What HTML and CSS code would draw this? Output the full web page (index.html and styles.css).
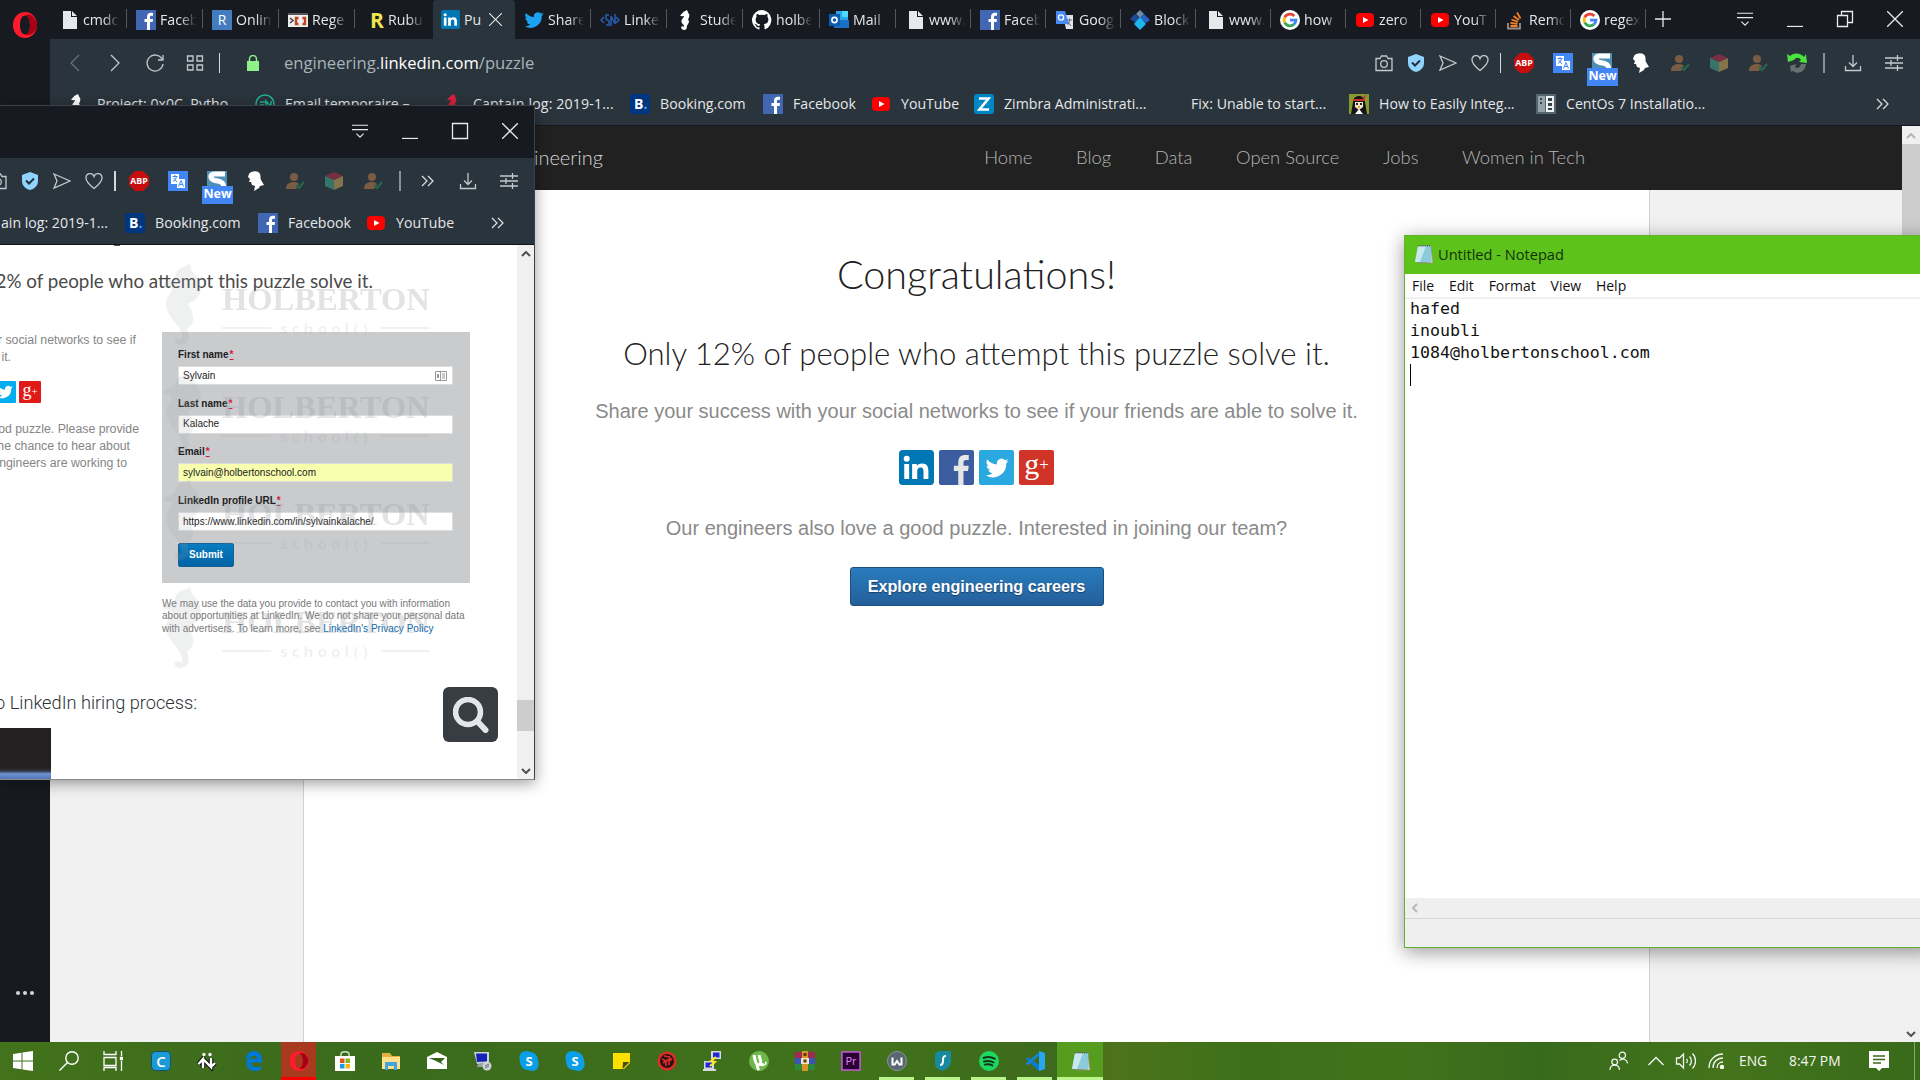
FILE: index.html
```
<!DOCTYPE html>
<html lang="en">
<head>
<meta charset="utf-8">
<title>Puzzle | LinkedIn Engineering</title>
<link rel="stylesheet" href="styles.css">
</head>
<body>
<svg class="defs" aria-hidden="true">
  <symbol id="page" viewBox="0 0 20 20"><path fill="#e6e9eb" d="M4 1h8v6h6v12H4zM13 1l5 5h-5z"/></symbol>
  <symbol id="fb" viewBox="0 0 20 20"><path fill="#4267b2" d="M0 0h20v20H0z"/><path fill="#fff" d="M11 20v-8H8.500V9H11V7c0-2.800 1.600-4.200 4-4.200.9 0 1.700.1 2 .1v2.800h-1.500c-1.200 0-1.500.6-1.500 1.500V9h3l-.4 3H14v8z"/></symbol>
  <symbol id="in" viewBox="0 0 20 20"><rect width="20" height="20" rx="2" fill="#0077b5"/><path fill="#fff" d="M3 8h2.800v8.500H3zM7.500 8h2.700v1.200c.5-.8 1.400-1.500 3-1.500 2.800 0 3.600 1.800 3.600 4.300v4.500H14v-4c0-1.300-.2-2.500-1.700-2.500s-1.900 1.200-1.900 2.400v4.100H7.500z"/><circle cx="4.400" cy="5" r="1.700" fill="#fff"/></symbol>
  <symbol id="bird" viewBox="0 0 24 24"><path d="M23.600 4.900c-.8.400-1.700.6-2.700.8 1-.6 1.700-1.500 2.100-2.600-.9.500-1.900.9-3 1.100A4.700 4.700 0 0 0 12 8.500C8.100 8.300 4.600 6.400 2.300 3.600a4.700 4.700 0 0 0 1.400 6.300c-.8 0-1.500-.2-2.100-.6 0 2.300 1.600 4.200 3.800 4.700-.7.200-1.400.2-2.100.1.600 1.900 2.300 3.200 4.400 3.200A9.500 9.500 0 0 1 .7 19.300 13.400 13.400 0 0 0 21.300 7.300c.9-.7 1.700-1.500 2.300-2.400z"/></symbol>
  <symbol id="yt" viewBox="0 0 20 20"><rect x="1" y="3" width="18" height="14" rx="4" fill="#f00"/><path fill="#fff" d="M8 7l5.500 3L8 13z"/></symbol>
  <symbol id="google" viewBox="0 0 20 20"><circle cx="10" cy="10" r="10" fill="#fff"/><g fill="none" stroke-width="2.800"><path stroke="#ea4335" d="M14.300 6A6 6 0 0 0 4.700 7.300"/><path stroke="#fbbc05" d="M4.700 7.300a6 6 0 0 0 0 5.400"/><path stroke="#34a853" d="M4.700 12.700a6 6 0 0 0 9.200 1.700"/><path stroke="#4285f4" d="M13.900 14.400A6 6 0 0 0 16 10.200h-6"/></g></symbol>
  <symbol id="horse" viewBox="0 0 20 20"><path d="M11 0c-1 1-3.500 1-4.500 3L4 5.500l2 .8 2-.3c0 2-3 3-2.500 6 .4 2 2.500 2.500 2.500 4 0 1-1.500 1-1.500 0L5 17c.3 2 1.600 3 3 3 2 0 3.300-1.700 2.800-3.800L12 14c1.600-1.500 1-3.400 0-4.500 1.500-2 2-5 .3-6.500z"/></symbol>
  <symbol id="opera" viewBox="0 0 26 26"><path fill="#ff1b2d" fill-rule="evenodd" d="M13 0C6 0 1 5.700 1 13s5 13 12 13 12-5.700 12-13S20 0 13 0zm0 3.500c3 0 5 4 5 9.500s-2 9.500-5 9.500S8 18.500 8 13s2-9.500 5-9.500z"/><path fill="#a70014" d="M13 3.500c4-2.500 8 .2 9 2.500 4 5 4 9 0 14-2 2.500-6 4.500-9 2.500 3 0 5-4 5-9.500s-2-9.500-5-9.500z"/></symbol>
  <symbol id="menu" viewBox="0 0 18 18"><path d="M0 2.500h18M0 7.500h18M5 12l4 4 4-4"/></symbol>
  <symbol id="min" viewBox="0 0 16 16"><path d="M0 15.500h16"/></symbol>
  <symbol id="x" viewBox="0 0 16 16"><path d="M0 0l16 16M16 0L0 16"/></symbol>
  <symbol id="more" viewBox="0 0 14 12"><path d="M1 1l5 5-5 5M7 1l5 5-5 5"/></symbol>
  <symbol id="camera" viewBox="0 0 18 18"><path d="M1 4.500h4L6.500 2h5L13 4.500h4v12H1z"/><circle cx="9" cy="10" r="3.300"/></symbol>
  <symbol id="shield" viewBox="0 0 18 18"><path fill="#8fd3fe" stroke="none" d="M9 0l8 3v6c0 5-4 8-8 9-4-1-8-4-8-9V3z"/><path stroke="#20303b" stroke-width="2" d="M5 8.500l3 3 5-5"/></symbol>
  <symbol id="send" viewBox="0 0 18 18"><path d="M1 2l16 7-16 7 3-7z"/></symbol>
  <symbol id="heart" viewBox="0 0 18 18"><path d="M9 16.500C4 12.500 1 9.500 1 6c0-5 6.500-6 8-1.500C10.500 0 17 1 17 6c0 3.500-3 6.500-8 10.500z"/></symbol>
  <symbol id="abp" viewBox="0 0 20 20"><path fill="#c70d0e" stroke="none" d="M6 0h8l6 6v8l-6 6H6l-6-6V6z"/><text x="10" y="13.300" text-anchor="middle" class="abp-t">ABP</text></symbol>
  <symbol id="translate" viewBox="0 0 20 20"><path fill="#4285f4" stroke="none" d="M0 0h20v20H0z"/><path fill="#fff" stroke="none" d="M3 3h8v5h6v9H9v-4H3z"/><path stroke="#4285f4" d="M4.500 5.500h5M7 4v1.500M5 10.500c2-1 3-3 3.500-5M5.500 7l3.500 4M10.500 15.500L13 9.500l2.500 6M11.500 13.500h3"/></symbol>
  <symbol id="sx" viewBox="0 0 20 20"><path fill="#4d8fb5" stroke="none" d="M0 0h20v20H0z"/><path stroke="#fff" stroke-width="5" d="M18 3H8C2 3 3 8 8 9.500c7 1 10 3 8 8.500"/></symbol>
  <symbol id="head" viewBox="0 0 20 20"><path fill="#fff" stroke="none" d="M3 3c2-3 9-4 11 0 1 2 0 4 1 6l3 5-4 1-1 2-5 3 1-5-3-1-1-3H3l1-3-2-2z"/></symbol>
  <symbol id="person" viewBox="0 0 20 20"><g fill="#7b5c43" stroke="none"><circle cx="9" cy="6" r="4"/><path d="M1 18c0-5 3-7 8-7 3 0 4 1 5 2l-3 5z"/></g><path stroke="#23694f" stroke-width="2" d="M11 14l3 3 5-6"/></symbol>
  <symbol id="cube" viewBox="0 0 20 20"><g stroke="none"><path fill="#792f43" d="M10 1l9 4-9 4-9-4z"/><path fill="#377568" d="M1 5l9 4v10l-9-4z"/><path fill="#85744b" d="M19 5l-9 4v10l9-4z"/></g></symbol>
  <symbol id="refresh" viewBox="0 0 20 20"><path fill="#4be33e" stroke="none" d="M0 1l3 2c4-4 11-3 14 1l2-3 1 9-8-1 2-2c-2-3-5-3-7 0L1 9z"/><path fill="#68706f" stroke="none" d="M3 13l6-2-1 3c2 2 5 1 6-3h5c-1 8-8 11-13 7l-2 1z"/></symbol>
  <symbol id="down" viewBox="0 0 18 18"><path d="M9 1v11M5 8.500l4 4 4-4M1.500 12v4.500h15V12"/></symbol>
  <symbol id="tune" viewBox="0 0 18 18"><path d="M0 4h18M0 9h18M0 14h18M12.500 1v6M6 6v6M12.500 11v6"/></symbol>
  <symbol id="skype" viewBox="0 0 20 20"><path fill="#0a9fe8" d="M7 0c3 0 4 1 5 1 5 1 7 5 7 9 2 5-1 10-6 10-2 0-3-1-4-1-5 0-8-4-8-9C-1 5 2 0 7 0z"/><text x="10" y="14.500" text-anchor="middle" class="skype-t">S</text></symbol>
  <symbol id="notepad" viewBox="0 0 20 20"><path fill="#e9eef0" stroke="#8a8a80" stroke-width=".7" d="M17 2l2 17H4l13-1z"/><path fill="#8ccbdb" d="M4 2h13v16H1z"/><path fill="#c6e8ef" d="M4 2h8L6 18H1z"/><path stroke="#566" stroke-width="1.400" stroke-dasharray="1.200 1" d="M4 1.800h13"/></symbol>
  <symbol id="seahorse" viewBox="0 0 44 82"><path d="M28 0c1 4 0 7 4 10 6 6 8 14 6 20-2 5-8 7-12 9 0 4 5 8 5 15 1 6-3 9-6 12 2 5 3 12-3 15-5 3-11-1-9-5 2-2 3 1 6 0 3-3 0-8-4-14C8 53 2 46 5 36c1-4 5-7 5-11-3-2-7-1-9-3 2-4 7-4 11-7 2-3 1-5 4-8 4-4 10-3 12-7z"/><path class="sh" d="M16 36c5-6 17-5 21-12 2 8-2 13-8 15-5 2-6 6-3 13-7-4-12-10-10-16z"/></symbol>
</svg>

<div class="desktop">

<section class="browser">
  <aside class="rail"><svg class="rail-logo"><use href="#opera"/></svg><span class="dots"><i></i><i></i><i></i></span></aside>
  <div class="main">
    <div class="tabs">
      <div class="tab w77"><svg><use href="#page"/></svg><span>cmdc</span></div>
      <div class="tab"><svg><use href="#fb"/></svg><span>Faceb</span></div>
      <div class="tab"><svg viewBox="0 0 20 20"><path fill="#437dbf" d="M0 0h20v20H0z"/><text x="10" y="15" text-anchor="middle" class="g-r">R</text></svg><span>Onlin</span></div>
      <div class="tab"><svg viewBox="0 0 20 20"><path fill="#eee" d="M0 3h20v14H0z"/><path fill="#555" d="M0 3h20v2H0z"/><path d="M2 8l3 2.500L2 13" fill="none" stroke="#444" stroke-width="1.500"/><path d="M10.500 8H8v6h2.500M14.500 8H17v6h-2.500" fill="none" stroke="#c0431d" stroke-width="2.400"/></svg><span>Rege</span></div>
      <div class="tab w78 last"><svg viewBox="0 0 20 20"><text x="13" y="18" text-anchor="middle" class="g-rub">R</text></svg><span>Rubu</span></div>
      <div class="tab active"><svg><use href="#in"/></svg><span>Pu</span><svg class="ctl close-s"><use href="#x"/></svg></div>
      <div class="tab"><svg fill="#1da1f2"><use href="#bird"/></svg><span>Share</span></div>
      <div class="tab"><svg viewBox="0 0 20 20" fill="none" stroke="#2a5db0" stroke-width="1.500"><path d="M4 7l-3 3 3 3M16 7l3 3-3 3M9 5H6v4l3 2v4H6M11 16V6l4 8V4"/></svg><span>Linke</span></div>
      <div class="tab"><svg fill="#fff"><use href="#horse"/></svg><span>Stude</span></div>
      <div class="tab w77"><svg viewBox="0 0 16 16"><path fill="#fff" d="M8 0a8 8 0 0 0-2.500 15.600c.4.100.5-.2.500-.4v-1.500c-2.200.5-2.700-1-2.700-1-.4-.9-.9-1.200-.9-1.200-.7-.5.100-.5.100-.5.800.1 1.200.8 1.200.8.7 1.300 1.900.9 2.300.7.100-.5.300-.9.500-1.100-1.800-.2-3.600-.9-3.600-4 0-.9.300-1.600.8-2.100-.1-.2-.4-1 .1-2.100 0 0 .7-.2 2.200.8a7.700 7.700 0 0 1 4 0c1.500-1 2.200-.8 2.200-.8.400 1.100.1 1.900.1 2.100.5.500.8 1.200.8 2.100 0 3.100-1.900 3.700-3.700 3.900.3.300.6.800.6 1.500v2.200c0 .2.100.5.500.4A8 8 0 0 0 8 0z"/></svg><span>holbe</span></div>
      <div class="tab"><svg viewBox="0 0 20 20"><path fill="#28a8ea" d="M7 1h12v11H7z"/><path fill="#50d9ff" d="M13 1h6v6h-6z"/><path fill="#1b6fc5" d="M5 10l15 0v8H5z"/><path fill="#0a5cb0" d="M0 4h11v12H0z"/><circle cx="5.500" cy="10" r="2.600" fill="none" stroke="#fff" stroke-width="1.600"/></svg><span>Mail</span></div>
      <div class="tab w75"><svg><use href="#page"/></svg><span>www.</span></div>
      <div class="tab w75"><svg><use href="#fb"/></svg><span>Faceb</span></div>
      <div class="tab w75"><svg viewBox="0 0 20 20"><path fill="#dfe3ea" d="M8 5h10v14h-7z"/><path fill="#4a8af4" d="M1 1h9l4 13H1z"/><circle cx="6" cy="7.500" r="2.600" fill="none" stroke="#fff" stroke-width="1.300"/><path d="M12 10h5M14.500 8.500V10c0 2-1 4-2 5M13 12l3 4" stroke="#6a7480" fill="none"/></svg><span>Goog</span></div>
      <div class="tab w75"><svg viewBox="0 0 20 20"><path fill="#6f8fae" d="M10 0l4 4-4 4-4-4z"/><path fill="#1e4c94" d="M5 4l5 5-4 4-6-4z"/><path fill="#2a63c8" d="M14 4l6 6-4 3-6-5z"/><path fill="#1fb4ee" d="M10 7l6 7-6 6-6-6z"/></svg><span>Block</span></div>
      <div class="tab w75"><svg><use href="#page"/></svg><span>www.</span></div>
      <div class="tab w75"><svg><use href="#google"/></svg><span>how</span></div>
      <div class="tab w75"><svg><use href="#yt"/></svg><span>zero</span></div>
      <div class="tab w75"><svg><use href="#yt"/></svg><span>YouT</span></div>
      <div class="tab w75"><svg viewBox="0 0 20 20" fill="none"><path stroke="#9a8f86" stroke-width="1.800" d="M3 13v5.500h12V13"/><path stroke="#f48024" stroke-width="1.800" d="M5.500 16h7M5.500 13l7 .8M6.500 9.500l6.500 2.300M8.500 6l5.500 4M12 2.500l3.500 6"/></svg><span>Remo</span></div>
      <div class="tab w75"><svg><use href="#google"/></svg><span>regex</span></div>
      <svg class="ctl plus" viewBox="0 0 16 16"><path d="M8 0v16M0 8h16"/></svg>
      <div class="controls"><svg class="ctl"><use href="#menu"/></svg><svg class="ctl"><use href="#min"/></svg><svg class="ctl" viewBox="0 0 16 16"><path d="M.5 4.500h10v11H.5zM4.500 4.500v-4h11v11h-5"/></svg><svg class="ctl"><use href="#x"/></svg></div>
    </div>
    <div class="toolbar">
      <svg class="ln dim" viewBox="0 0 18 18"><path d="M13 1L5 9l8 8"/></svg>
      <svg class="ln" viewBox="0 0 18 18"><path d="M5 1l8 8-8 8"/></svg>
      <svg class="ln" viewBox="0 0 18 18"><path d="M16 5a8 8 0 1 0 1 5M17 1v5h-5"/></svg>
      <svg class="ln" viewBox="0 0 18 18"><path d="M1.500 2h5.500v5H1.500zM11 2h5.500v5H11zM1.500 11h5.500v5H1.500zM11 11h5.500v5H11z"/></svg>
      <i class="bar thin"></i>
      <svg class="lock" viewBox="0 0 12 16"><path fill="#8ff08a" d="M0 6h12v10H0z"/><path fill="none" stroke="#8ff08a" stroke-width="1.500" d="M2.500 6V4a3.500 3.500 0 0 1 7 0v2"/></svg>
      <span class="url">engineering.<b>linkedin.com</b>/puzzle</span>
      <div class="ext">
        <svg class="ln"><use href="#camera"/></svg><svg class="ln"><use href="#shield"/></svg><svg class="ln"><use href="#send"/></svg><svg class="ln"><use href="#heart"/></svg><i class="bar thin"></i>
        <svg class="ex"><use href="#abp"/></svg><svg class="ex"><use href="#translate"/></svg><span class="ex sbox"><svg class="ex"><use href="#sx"/></svg><em>New</em></span><svg class="ex"><use href="#head"/></svg><svg class="ex"><use href="#person"/></svg><svg class="ex"><use href="#cube"/></svg><svg class="ex"><use href="#person"/></svg><svg class="ex"><use href="#refresh"/></svg><i class="bar grey"></i>
        <svg class="ln"><use href="#down"/></svg><svg class="ln tune"><use href="#tune"/></svg>
      </div>
    </div>
    <div class="marks">
      <div class="mk m188"><svg fill="#fff"><use href="#horse"/></svg><span>Project: 0x0C. Pytho...</span></div>
      <div class="mk m188"><svg viewBox="0 0 20 20" fill="none" stroke="#1fb58f" stroke-width="1.600"><circle cx="10" cy="10" r="9"/><path d="M5 8h5M5 11h4M11 13V7l5 6V7"/></svg><span>Email temporaire –...</span></div>
      <div class="mk m187"><svg fill="#d8213f"><use href="#horse"/></svg><span class="wide">Captain log: 2019-1...</span></div>
      <div class="mk m133"><svg viewBox="0 0 20 20"><rect width="20" height="20" rx="2" fill="#003580"/><text x="4" y="15" class="g-b">B<tspan fill="#3ba7ee">.</tspan></text></svg><span>Booking.com</span></div>
      <div class="mk m108"><svg><use href="#fb"/></svg><span>Facebook</span></div>
      <div class="mk m103"><svg><use href="#yt"/></svg><span>YouTube</span></div>
      <div class="mk m187"><svg viewBox="0 0 20 20"><rect width="20" height="20" rx="3" fill="#0087c3"/><path fill="none" stroke="#fff" stroke-width="2.600" d="M5 4.500h9.500L5.500 15.500H15"/></svg><span>Zimbra Administrati...</span></div>
      <div class="mk m188"><svg></svg><span>Fix: Unable to start...</span></div>
      <div class="mk m187"><svg viewBox="0 0 20 20"><path fill="#879a2d" d="M0 0h20v20H0z"/><path fill="#151515" d="M4 8c0-8 12-8 12 0l2 12H2z"/><path fill="#f0e4cf" d="M6 8h8v5l-4 3-4-3z"/><path fill="#fff" d="M6 20l4-5 4 5z"/><path fill="#c9302c" d="M4 5h12v2H4zM13 4l5-4-3 5z"/><path fill="#222" d="M7 9h2v2H7zM11 9h2v2h-2z"/><path fill="#f0a020" d="M9 12h2v2H9z"/></svg><span>How to Easily Integ...</span></div>
      <div class="mk"><svg viewBox="0 0 20 20"><path fill="#56666f" d="M0 0h20v20H0z"/><path fill="#93a3ac" d="M2 2h7v16H2z"/><path fill="#edf1f3" d="M10 2h8v16h-8z"/><path fill="#35434b" d="M4 4h2v2H4zM4 8h2v2H4zM12 4h4v3h-4zM12 9h4v3h-4zM12 14h4v2h-4z"/></svg><span>CentOs 7 Installatio...</span></div>
      <svg class="ln more"><use href="#more"/></svg>
    </div>
    <div class="view">
      <div class="site">
        <header class="nav"><span class="brand">Engineering</span><nav><a>Home</a><a>Blog</a><a>Data</a><a>Open Source</a><a>Jobs</a><a>Women in Tech</a></nav></header>
        <main class="sheet">
          <h1>Congratulations!</h1>
          <h2>Only 12% of people who attempt this puzzle solve it.</h2>
          <p>Share your success with your social networks to see if your friends are able to solve it.</p>
          <div class="social">
            <svg><use href="#in"/></svg>
            <svg class="s-fb"><use href="#fb"/></svg>
            <span class="s-tw"><svg fill="#fff"><use href="#bird"/></svg></span>
            <span class="s-gp">g<small>+</small></span>
          </div>
          <p class="p2">Our engineers also love a good puzzle. Interested in joining our team?</p>
          <a class="cta">Explore engineering careers</a>
        </main>
      </div>
      <div class="scroll"><svg viewBox="0 0 10 6"><path d="M1 5l4-4 4 4" stroke="#b5b5b5"/></svg><i></i><svg viewBox="0 0 10 6"><path d="M1 1l4 4 4-4" stroke="#505050"/></svg></div>
    </div>
  </div>
</section>

<section class="popup">
  <div class="p-title"><svg class="ctl"><use href="#menu"/></svg><svg class="ctl"><use href="#min"/></svg><svg class="ctl" viewBox="0 0 16 16"><path d="M.5.500h15v15H.5z"/></svg><svg class="ctl"><use href="#x"/></svg></div>
  <div class="p-tools ext">
    <svg class="ln"><use href="#camera"/></svg><svg class="ln"><use href="#shield"/></svg><svg class="ln"><use href="#send"/></svg><svg class="ln"><use href="#heart"/></svg><i class="bar"></i>
    <svg class="ex"><use href="#abp"/></svg><svg class="ex"><use href="#translate"/></svg><span class="ex sbox"><svg class="ex"><use href="#sx"/></svg><em>New</em></span><svg class="ex"><use href="#head"/></svg><svg class="ex"><use href="#person"/></svg><svg class="ex"><use href="#cube"/></svg><svg class="ex"><use href="#person"/></svg><i class="bar grey p-bar"></i>
    <svg class="more"><use href="#more"/></svg><svg class="ln p-down"><use href="#down"/></svg><svg class="ln tune"><use href="#tune"/></svg>
  </div>
  <div class="p-marks">
    <div class="mk cut"><span>ain log: 2019-1...</span></div>
    <div class="mk m133"><svg viewBox="0 0 20 20"><rect width="20" height="20" rx="2" fill="#003580"/><text x="4" y="15" class="g-b">B<tspan fill="#3ba7ee">.</tspan></text></svg><span>Booking.com</span></div>
    <div class="mk m108"><svg><use href="#fb"/></svg><span>Facebook</span></div>
    <div class="mk"><svg><use href="#yt"/></svg><span>YouTube</span></div>
    <svg class="more"><use href="#more"/></svg>
  </div>
  <div class="p-body">
    <div class="doc">
      <i class="tail"></i>
      <div class="marksheet">
        <div class="wm"><svg><use href="#seahorse"/></svg><div><b>HOLBERTON</b><span>school()</span></div></div>
        <div class="wm"><svg><use href="#seahorse"/></svg><div><b>HOLBERTON</b><span>school()</span></div></div>
        <div class="wm"><svg><use href="#seahorse"/></svg><div><b>HOLBERTON</b><span>school()</span></div></div>
        <div class="wm"><svg><use href="#seahorse"/></svg><div><b>HOLBERTON</b><span>school()</span></div></div>
      </div>
      <h3>2% of people who attempt this puzzle solve it.</h3>
      <div class="cols">
        <div class="left">
          <p>r social networks to see if</p><p class="l2">it.</p>
          <div class="mini"><span class="s-tw"><svg fill="#fff"><use href="#bird"/></svg></span><span class="s-gp">g<small>+</small></span></div>
          <p class="l3">od puzzle. Please provide</p><p class="l4">he chance to hear about</p><p class="l5">ngineers are working to</p>
        </div>
        <div class="right">
          <form class="form">
            <label>First name<u>*</u></label><div class="field">Sylvain<svg viewBox="0 0 12 10"><path fill="none" stroke="#999" d="M.5.500h11v9H.5zM5.500 1v8M7 3h3M7 5h3M7 7h3"/><path fill="#999" d="M2 3h2v4H2z"/></svg></div>
            <label>Last name<u>*</u></label><div class="field">Kalache</div>
            <label>Email<u>*</u></label><div class="field yellow">sylvain@holbertonschool.com</div>
            <label>LinkedIn profile URL<u>*</u></label><div class="field">https://www.linkedin.com/in/sylvainkalache/</div>
            <div class="submit">Submit</div>
          </form>
          <p class="legal">We may use the data you provide to contact you with information<br>about opportunities at LinkedIn. We do not share your personal data<br>with advertisers. To learn more, see <a>LinkedIn's Privacy Policy</a></p>
        </div>
      </div>
      <div class="foot"><span>o LinkedIn hiring process:</span><div class="find"><svg viewBox="0 0 36 36"><circle cx="15" cy="15" r="12.500" fill="none" stroke="#e3e5ec" stroke-width="5.500"/><path stroke="#e3e5ec" stroke-width="6" stroke-linecap="round" d="M25 25l7.500 8"/></svg></div></div>
      <div class="photo"></div>
    </div>
    <div class="scroll p-scroll"><svg viewBox="0 0 10 6"><path d="M1 5l4-4 4 4" stroke="#505050"/></svg><i></i><svg viewBox="0 0 10 6"><path d="M1 1l4 4 4-4" stroke="#505050"/></svg></div>
  </div>
</section>

<section class="notepad">
  <div class="n-title"><svg><use href="#notepad"/></svg><span>Untitled - Notepad</span></div>
  <div class="n-menu"><span>File</span><span>Edit</span><span>Format</span><span>View</span><span>Help</span></div>
  <div class="n-text">hafed<br>inoubli<br>1084@holbertonschool.com<br><i class="caret"></i></div>
  <div class="n-scroll"><svg viewBox="0 0 7 10"><path d="M6 1L2 5l4 4" fill="none" stroke="#b8b8b8" stroke-width="2"/></svg></div>
  <div class="n-status"></div>
</section>

<footer class="taskbar">
  <div class="apps">
    <div class="app"><svg viewBox="0 0 20 20"><path fill="#fff" d="M0 3l8.500-1.200v7.700H0zM9.500 1.600L20 0v9.500H9.500zM0 10.500h8.500v7.700L0 17zM9.500 10.500H20V20L9.500 18.400z"/></svg></div>
    <div class="app"><svg viewBox="0 0 20 20" fill="none" stroke="#fff" stroke-width="1.400"><circle cx="13" cy="7" r="6.200"/><path d="M8.500 11.500L.5 19.500"/></svg></div>
    <div class="app"><svg viewBox="0 0 20 20" fill="none" stroke="#fff" stroke-width="1.300"><path d="M1 0v3.500h12V0M1 6.500h12v8H1zM1 20v-3.500h12V20M18.500 0v5M18.500 10v10"/><path fill="#fff" d="M17.500 6.500h2v2h-2z"/></svg></div>
    <div class="app"><svg viewBox="0 0 20 20"><rect x=".5" y=".5" width="19" height="19" rx="4" fill="#1b9ad6" stroke="#17506f"/><text x="10" y="15.500" text-anchor="middle" class="g-c">C</text></svg></div>
    <div class="app"><svg viewBox="0 0 20 20"><path fill="none" stroke="#111" stroke-width="4.500" d="M1.500 13L6 8v9M6 8l8 8V7M14 16l4-4"/><path fill="none" stroke="#fff" stroke-width="2.400" d="M1.500 13L6 8v9M6 8l8 8V7M14 16l4-4"/><circle cx="7" cy="3.500" r="1.700" fill="#fff"/><circle cx="13" cy="3.500" r="1.700" fill="#fff"/></svg></div>
    <div class="app"><svg viewBox="0 0 20 20"><path fill="#0078d7" d="M2 9C3 3 7 0 11 0c5 0 8 4 8 8v3.500H8c0 5 6 5.500 10 3.200v3.800C11 22 3.500 19 3.500 12c0-3 1.500-5 4-6.500C5 6 3 7.500 2 9zm6-1h6c0-4.500-5.500-4.500-6 0z"/></svg></div>
    <div class="app opera-app"><svg><use href="#opera"/></svg></div>
    <div class="app"><svg viewBox="0 0 20 20"><path fill="none" stroke="#cfe0c6" stroke-width="1.500" d="M6 6V3c0-3 8-3 8 0v3"/><path fill="#fff" d="M0 5h20v15H0z"/><path fill="#e8501e" d="M5 7.500h4.500V12H5z"/><path fill="#7cb816" d="M10.500 7.500H15V12h-4.500z"/><path fill="#139ee8" d="M5 13h4.500v4.500H5z"/><path fill="#f9b50a" d="M10.500 13H15v4.500h-4.500z"/></svg></div>
    <div class="app"><svg viewBox="0 0 20 20"><path fill="#e2b23c" d="M1 2h8l2 3h8v4H1z"/><path fill="#ffe08c" d="M1 6h18v12H1z"/><path fill="#3fa5dc" d="M4 19v-8h12v8h-3v-4H7v4z"/></svg></div>
    <div class="app"><svg viewBox="0 0 20 20"><path fill="#fff" d="M0 6l10-5 10 5v12H0z"/><path fill="#35611a" d="M2 7h16l-4 4 3 3-8-4z"/></svg></div>
    <div class="app"><svg viewBox="0 0 20 20"><path fill="#ccd1dc" d="M1 1h15v11l-12 1z"/><path fill="#1522b8" d="M3 2.500h11v8L4 11z"/><path fill="#9aa0a8" d="M5 13h8l3 3H4z"/><circle cx="14" cy="15" r="4.500" fill="#cdd3d2"/><path stroke="#667" fill="none" d="M12 15l4-2M12 17l4-2"/></svg></div>
    <div class="app"><svg><use href="#skype"/></svg></div>
    <div class="app"><svg><use href="#skype"/></svg></div>
    <div class="app"><svg viewBox="0 0 20 20"><path fill="#ffe100" d="M2 2h17v10l-6 6H2z"/><path fill="#4b4a12" d="M12 11h6.500l-7 7z"/></svg></div>
    <div class="app"><svg viewBox="0 0 20 20"><circle cx="10" cy="10" r="9.500" fill="#e02b2b"/><circle cx="10" cy="10" r="7" fill="#2d1010"/><path fill="none" stroke="#e02b2b" stroke-width="1.600" d="M5 8l4 2v5M15 8l-3 2v4M6 12l8-5M7 5l6 1"/></svg></div>
    <div class="app"><svg viewBox="0 0 20 20"><path fill="#d8d8d8" d="M8 0h10v8H8zM1 10h10v8H1zM0 18h13v2H0z"/><path fill="#1d2ad8" d="M10 1.500h6.500v5H10zM2.500 11.500H9v5H2.500z"/><path stroke="#ffe62b" stroke-width="2" fill="none" d="M13 6L8 10l4 1-5 4"/></svg></div>
    <div class="app"><svg viewBox="0 0 20 20"><circle cx="10" cy="10" r="10" fill="#6eb74a"/><path fill="none" stroke="#fff" stroke-width="3" d="M5 4c1 5 2 12 6 9 2-2-.5-6-1-9M11 13c3 2 6-1 5-1M8 13c0 3 1 5 2 6"/></svg></div>
    <div class="app"><svg viewBox="0 0 20 20"><path fill="#a22a52" d="M0 1h20v6H0z"/><path fill="#3a53b8" d="M0 7h20v6H0z"/><path fill="#2e8a3a" d="M0 13h20v6H0z"/><path fill="#d99628" d="M7 0h6v20H7z"/><path fill="#f2e3c0" d="M6 7h8v6H6z"/><path fill="#5a3a10" d="M8.500 2h3v3h-3zM8.500 8.500h3v3h-3z"/></svg></div>
    <div class="app"><svg viewBox="0 0 20 20"><path fill="#2a0034" stroke="#c35ad8" stroke-width="1.500" d="M1 1h18v18H1z"/><text x="10" y="13.500" text-anchor="middle" class="g-pr">Pr</text></svg></div>
    <div class="app run"><svg viewBox="0 0 20 20"><circle cx="10" cy="10" r="9.500" fill="#5a6672" stroke="#8a949c"/><path fill="none" stroke="#fff" stroke-width="2" d="M5.500 6.500v7h2.200L10 10l2.300 3.500h2.200v-7"/></svg></div>
    <div class="app run"><svg viewBox="0 0 20 20"><path fill="#178a9e" d="M7 0h11v10c0 6-5 8-8 10-4-1-8-3-8-7V5c0-3 2-5 5-5z"/><path fill="none" stroke="#fff" stroke-width="2" d="M13 5c-3 0-3 2-3 5s-1 4-3 4"/></svg></div>
    <div class="app run"><svg viewBox="0 0 20 20"><circle cx="10" cy="10" r="10" fill="#1ed760"/><path fill="none" stroke="#12351c" stroke-width="2" stroke-linecap="round" d="M4.500 7c4-1.500 8-1 11.500.8M5 10.500c3.500-1 7-.6 9.500.8M5.800 13.600c3-.8 5.500-.4 7.500.8"/></svg></div>
    <div class="app run"><svg viewBox="0 0 20 20"><path fill="#0a7bd0" d="M14 0l6 2v16l-6 2L1 8l2-2 11 8z"/><path fill="#2aa5f0" d="M14 0l6 2v16l-6 2z"/><path fill="none" stroke="#1484d8" stroke-width="2.600" d="M1.500 13.500L14 3"/></svg></div>
    <div class="app np"><svg><use href="#notepad"/></svg></div>
  </div>
  <div class="tray">
    <svg class="t-people" viewBox="0 0 20 20"><circle cx="14" cy="4" r="3.300"/><circle cx="6" cy="11" r="3"/><path d="M11 9.500c4-3 8-1 8.500 3M1 19.500c0-7 10-7 10 0"/></svg>
    <svg class="t-up" viewBox="0 0 16 10"><path d="M.5 9L8 1.500 15.500 9"/></svg>
    <svg class="t-vol" viewBox="0 0 20 18"><path d="M1 6h3l4-4v14l-4-4H1zM11 7c1 1 1 3 0 4M14 4.500c2.500 2.500 2.500 6.500 0 9M17 1.500c4 4 4 11 0 15"/></svg>
    <svg class="t-wifi" viewBox="0 0 16 16"><path d="M1 15C1 7 7 1 15 1M5 15c0-6 4-10 10-10M9 15c0-3.500 2.500-6 6-6"/><circle cx="14" cy="14" r="1.600" fill="#fff"/></svg>
    <span class="t-lang">ENG</span><span class="t-time">8:47 PM</span>
    <svg class="t-note" viewBox="0 0 20 20"><path fill="#fff" stroke="none" d="M0 0h20v17h-7l-3 3-3-3H0z"/><path stroke="#3a6a1c" stroke-width="1.500" d="M4 5h12M4 8.500h12M4 12h8"/></svg>
    <i class="t-end"></i>
  </div>
</footer>
</div>
</body>
</html>
```
FILE: styles.css
```
* { box-sizing: border-box; }
body { margin: 0; font: 14.15px/20px "Open Sans", "Noto Sans", sans-serif; color: #e4e7e9; }
h1, h2, h3, p { margin: 0; font-weight: 400; }
svg { display: block; flex: none; }
.defs { position: absolute; width: 0; height: 0; }
.desktop { position: relative; width: 1920px; height: 1080px; overflow: hidden; background: #fff; display: flex; flex-direction: column; }

/* main browser */
.browser { display: flex; height: 1042px; background: #171b21; }
.rail { width: 50px; display: flex; flex-direction: column; justify-content: space-between; align-items: center; padding: 12px 0 47px; background: #171b21; }
.rail-logo { width: 26px; height: 26px; }
.dots { display: flex; gap: 3px; }
.dots i { width: 4px; height: 4px; border-radius: 50%; background: #d4d7da; }
.main { flex: 1; min-width: 0; display: flex; flex-direction: column; }
.tabs { height: 39px; display: flex; background: #171b21; }
.tab { position: relative; width: 76px; flex: none; display: flex; align-items: center; padding-left: 9px; gap: 4px; overflow: hidden; white-space: nowrap; }
.tab > svg { width: 20px; height: 20px; }
.tab span { width: 37px; overflow: hidden; -webkit-mask-image: linear-gradient(90deg, #000 55%, transparent 98%); }
.tab::after { content: ""; position: absolute; right: 0; top: 9px; height: 19px; width: 1px; background: #53585d; }
.tab.last::after, .tab.active::after { display: none; }
.w77 { width: 77px; } .w78 { width: 78px; } .w75 { width: 75px; }
.tab.active { width: 82px; background: #2a343c; border-radius: 4px 4px 0 0; padding-left: 8px; }
.tab.active > svg:first-child { width: 19px; height: 19px; }
.tab.active span { width: 21px; -webkit-mask-image: none; }
.tab .close-s { width: 13px; height: 13px; overflow: visible; }
.ctl { width: 16px; height: 16px; fill: none; stroke: #e9ebec; stroke-width: 1.3; overflow: visible; }
.plus { margin: 11px 0 0 9px; }
.controls { flex: 1; display: flex; justify-content: flex-end; gap: 34px; padding: 11px 17px 0 0; }
.toolbar { height: 46px; display: flex; align-items: center; background: #2a343c; padding: 2px 17px 0 16px; }
.ln { width: 18px; height: 18px; fill: none; stroke: #c3cacf; stroke-width: 1.3; }
.toolbar > .ln { margin-right: 22px; }
.dim { opacity: .4; }
.bar { width: 2px; height: 20px; background: #d5d9dc; flex: none; margin-left: -7px; }
.bar.thin { width: 1px; margin-right: 1px; }
.lock { width: 12px; height: 16px; margin-left: 26px; }
.url { margin-left: 25px; font-size: 16.6px; line-height: 24px; color: #a8b3ba; white-space: nowrap; }
.url b { font-weight: 400; color: #fff; }
.ext { flex: 1; display: flex; align-items: center; justify-content: flex-end; fill: none; }
.ext > .ln { margin-right: 14px; }
.ext .bar { margin: 0 13px 0 -3px; }
.ext .ex { width: 20px; height: 20px; margin-right: 19px; }
.ext .sbox { position: relative; }
.sbox .ex { margin: 0; }
.sbox em { position: absolute; left: -5px; top: 15px; width: 31px; height: 18px; background: #4285f4; color: #fff; font: 700 12.5px/15px "Open Sans", sans-serif; text-align: center; }
.ext .grey { background: #8a9196; margin: 0 19px 0 -3px; }
.ext .tune { margin: 0 0 0 9px; }
.ext .ln:nth-last-child(2) { margin-right: 14px; }
.marks { height: 41px; display: flex; align-items: center; background: #2a343c; border-bottom: 1px solid #14181c; padding: 0 30px 2px 17px; }
.mk { display: flex; gap: 10px; align-items: center; flex: none; white-space: nowrap; }
.mk svg { width: 20px; height: 20px; }
.m188 { width: 188px; } .m187 { width: 187px; } .m133 { width: 133px; } .m108 { width: 108px; } .m103 { width: 103px; }
.wide { letter-spacing: .15px; }
.more { width: 14px; height: 12px; fill: none; stroke: #dfe3e5; stroke-width: 1.2; margin-left: auto; }
.view { flex: 1; display: flex; min-height: 0; }
.site { flex: 1; display: flex; flex-direction: column; background: #f1f1f1; }
.nav { height: 64px; background: #212121; display: flex; justify-content: space-between; align-items: center; padding: 0 317px 3px 420px; font: 300 18.4px/24px Lato, sans-serif; color: #b5b5b5; }
.brand { font-size: 20px; color: #d8d8d8; width: 133px; display: flex; justify-content: flex-end; white-space: nowrap; }
.nav nav { display: flex; gap: 43.6px; }
.sheet { width: 1347px; margin-left: 253px; flex: 1; background: #fff; border: solid #d0d0d0; border-width: 0 1px; display: flex; flex-direction: column; align-items: center; padding-top: 60px; font: 20px/24px "Liberation Sans", Arial, sans-serif; color: #8a8a8a; }
.sheet h1 { font: 300 39.5px/48px Lato, sans-serif; color: #222; }
.sheet h2 { font: 300 31.15px/40px Lato, sans-serif; color: #222; margin: 35px 0 26px; }
.social { display: flex; gap: 5px; margin: 27px 0 31px; }
.social > * { width: 35px; height: 35px; border-radius: 2px; }
.s-fb { filter: brightness(.9); }
.s-tw { background: #29a9e0; display: flex; align-items: center; justify-content: center; }
.s-tw svg { width: 24px; height: 24px; }
.s-gp { background: #d03428; color: #fff; font: 30px/28px "Liberation Serif", serif; display: flex; justify-content: center; }
.s-gp small { font-size: 17px; line-height: 30px; }
.cta { margin-top: 27px; width: 254px; height: 39px; border: 1px solid #1b4f7d; border-radius: 3px; background: linear-gradient(#2a7cbd, #235f9a); color: #fff; font-weight: 700; font-size: 16.2px; line-height: 37px; text-align: center; text-shadow: 0 1px 1px #1b3f63; }
.scroll { width: 18px; background: #f0f0f0; display: flex; flex-direction: column; align-items: center; padding: 7px 0 5px; }
.scroll svg { width: 10px; height: 6px; fill: none; stroke-width: 2; }
.scroll i { width: 18px; height: 560px; background: #cdcdcd; margin: 5px 0 auto; }

/* second browser window */
.popup { position: absolute; left: 0; top: 105px; width: 535px; height: 675px; display: flex; flex-direction: column; border-right: 1px solid #3b4147; border-top: 1px solid #3b4147; border-bottom: 1px solid #8a8a8a; box-shadow: 0 3px 14px rgba(0,0,0,.4); background: #fff; }
.p-title { height: 52px; background: #171b21; display: flex; justify-content: flex-end; gap: 34px; padding: 17px 16px 0 0; }
.p-tools { flex: none; height: 46px; background: #2a343c; padding: 0 16px 0 0; }
.p-tools .p-bar { margin-right: 20px; }
.p-tools .more { margin: 0 24px 0 0; }
.p-tools .ln.p-down { margin-right: 14px; }
.p-marks { height: 41px; background: #2a343c; border-bottom: 1px solid #12161a; display: flex; align-items: center; padding: 0 29px 3px 0; }
.cut { width: 125px; padding-right: 17px; justify-content: flex-end; }
.p-body { flex: 1; display: flex; min-height: 0; }
.doc { position: relative; flex: 1; min-width: 0; display: flex; flex-direction: column; overflow: hidden; background: #fff; }
.tail { position: absolute; left: 114px; top: 0; width: 6px; height: 1px; background: #555; }
.doc h3 { width: 373px; height: 38px; margin-top: 17px; display: flex; justify-content: flex-end; white-space: nowrap; font: 18.8px/38px Lato, sans-serif; color: #4a4a4a; }
.cols { display: flex; margin-top: 32px; height: 332px; font: 12.3px/17px "Liberation Sans", Arial, sans-serif; color: #858585; }
.left { width: 162px; display: flex; flex-direction: column; }
.left p { display: flex; justify-content: flex-end; width: 136px; white-space: nowrap; }
.left .l2 { width: 11px; } .left .l3 { width: 139px; } .left .l4 { width: 130px; } .left .l5 { width: 127px; }
.mini { display: flex; gap: 3px; margin: 15px 0 18px -6px; }
.mini > * { width: 22px; height: 22px; border-radius: 1px; }
.mini .s-tw { background: #00aeef; } .mini .s-gp { background: #e01b17; font-size: 18px; line-height: 18px; }
.mini svg { width: 16px; height: 16px; }
.mini small { font-size: 11px; line-height: 20px; }
.form { width: 308px; height: 251px; background: #c9cbcd; padding: 14px 17px 0 16px; font-size: 10.2px; line-height: 18px; color: #222; display: flex; flex-direction: column; }
.form label { font-weight: 700; font-size: 10px; height: 20px; color: #1d1d22; }
.form u { color: #d7153a; margin-left: 1px; }
.field { height: 19px; margin-bottom: 9.700px; background: #fff; border: 1px solid #ddd; padding: 0 5px 0 4px; display: flex; justify-content: space-between; align-items: center; font-size: 10px; white-space: nowrap; }
.field svg { width: 12px; height: 10px; }
.yellow { background: #f8ffae; }
.submit { margin-top: 2px; width: 56px; height: 24px; border-radius: 2px; background: linear-gradient(#0a7cc0, #0063a5); border: 1px solid #12629a; color: #fff; font: 700 10px/22px "Liberation Sans", Arial, sans-serif; text-align: center; }
.legal { margin-top: 15px; font-size: 10.050px; line-height: 12.400px; white-space: nowrap; color: #777; }
.legal a { color: #0a66ac; }
.foot { display: flex; justify-content: space-between; padding: 25px 19px 0 0; height: 66px; font: 300 18.2px/34px Roboto, sans-serif; color: #2d3338; }
.foot > span { width: 197px; display: flex; justify-content: flex-end; white-space: nowrap; line-height: 32px; }
.find { width: 55px; height: 55px; border-radius: 6px; background: #373d43; display: flex; align-items: center; justify-content: center; }
.find svg { width: 36px; height: 36px; }
.photo { width: 51px; height: 51px; background: linear-gradient(#252122 0 78%, #31353f 84%, #6d93d6 90%, #5475b5); }
.marksheet { position: absolute; left: 162px; top: 18px; color: #9a9da1; opacity: .28; z-index: 2; }
.wm { display: flex; height: 82px; margin-bottom: 25.500px; }
.wm svg { width: 44px; height: 82px; fill: currentColor; opacity: .55; }
.wm .sh { fill: #777; }
.wm div { margin-left: 16px; width: 208px; padding-top: 16px; }
.wm b { display: block; font: 700 32.5px/40px "Liberation Serif", serif; }
.wm span { display: flex; align-items: center; justify-content: space-between; font: 700 15px/18px "Open Sans", sans-serif; letter-spacing: 4.2px; opacity: .5; }
.wm span::before, .wm span::after { content: ""; width: 49px; height: 2px; background: currentColor; }
.p-scroll { width: 17px; padding: 6px 0 5px; }
.p-scroll i { width: 17px; height: 31px; margin: 443px 0 auto; }

/* notepad */
.notepad { position: absolute; left: 1404px; top: 235px; width: 530px; height: 713px; border: 1px solid #62b32c; background: #fff; color: #111; display: flex; flex-direction: column; box-shadow: 0 4px 18px rgba(0,0,0,.4); }
.n-title { height: 38px; background: #5dc31b; display: flex; align-items: center; gap: 4px; padding: 0 0 2px 9px; font-size: 14.6px; color: #14300a; }
.n-title svg { width: 20px; height: 20px; }
.n-menu { height: 25px; display: flex; gap: 14.8px; padding: 2px 0 0 7px; border-bottom: 2px solid #f0f0f0; font-size: 14px; }
.n-text { flex: 1; padding-left: 5px; margin-top: -1px; font: 16.6px/22px "DejaVu Sans Mono", monospace; }
.caret { display: block; width: 1px; height: 22px; background: #000; }
.n-scroll { height: 21px; background: #efefef; border-bottom: 1px solid #d5d5d5; padding: 5px 0 0 6px; }
.n-scroll svg { width: 7px; height: 10px; }
.n-status { height: 28px; background: #efefef; }

/* taskbar */
.taskbar { height: 38px; display: flex; justify-content: space-between; background: linear-gradient(90deg, #42721b 0, #3a6a1c 20%, #41721b 45%, #3d6a1c 55%, #4d731b 58%, #3d6f1b 65%, #41721b 73%, #386a1c 80%, #43731b 90%, #386a1a); }
.apps { display: flex; }
.app { width: 46px; height: 38px; display: flex; align-items: center; justify-content: center; padding: 0 5px 0 6px; }
.app svg { width: 20px; height: 20px; }
.app:first-child { width: 45px; padding: 0 2px; }
.app:nth-child(3) { padding-right: 8px; }
.opera-app { background: linear-gradient(#a83a1d 35px, #fa0000 35px) content-box; }
.run { background: linear-gradient(transparent 35px, #b9f58a 35px) content-box; }
.np { background: linear-gradient(#569c1f 35px, #b9f58a 35px); }
.tray { display: flex; align-items: center; fill: none; stroke: #f4f7f2; stroke-width: 1.3; color: #f4f7f2; padding-right: 5px; }
.tray span { font-size: 13.8px; white-space: nowrap; stroke: none; }
.t-people { width: 19px; height: 20px; }
.t-up { width: 16px; height: 10px; margin-left: 20px; }
.t-vol { width: 21px; height: 18px; margin-left: 11px; }
.t-wifi { width: 16px; height: 16px; margin-left: 12px; }
.t-lang { margin-left: 15px; width: 50px; }
.t-time { width: 51px; }
.t-note { width: 20px; height: 20px; margin-left: 29px; }
.t-end { width: 1px; height: 38px; background: #8da878; margin-left: 25px; }

/* glyphs inside icons */
.abp-t { font: 700 8.8px "Open Sans", sans-serif; fill: #fff; stroke: none; }
.skype-t { font: 700 13px "Open Sans", sans-serif; fill: #fff; }
.g-r { font: 14px "Open Sans", sans-serif; fill: #fff; }
.g-rub { font: 700 21px "Open Sans", sans-serif; fill: #f1e54c; }
.g-b { font: 700 14px "Open Sans", sans-serif; fill: #fff; }
.g-c { font: 600 15px "Open Sans", sans-serif; fill: #fff; }
.g-pr { font: 11px "Open Sans", sans-serif; fill: #e28cf2; }
```
